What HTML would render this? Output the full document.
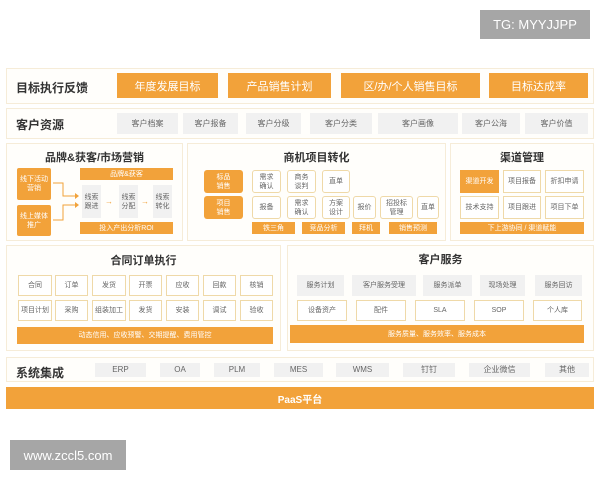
<!DOCTYPE html>
<html><head><meta charset="utf-8"><style>
*{margin:0;padding:0;box-sizing:border-box}
body{width:600px;height:480px;background:#fff;position:relative;overflow:hidden;font-family:"Liberation Sans","Noto Sans CJK SC",sans-serif;color:#444}
div{position:absolute}
.p{border:1px solid #f6ecd8;background:#fffefb}
.o{background:#f2a23a;color:#fff;display:flex;align-items:center;justify-content:center;text-align:center}
.g{background:#f1f1f1;color:#666;display:flex;align-items:center;justify-content:center;text-align:center}
.w{background:#fff;border:1px solid #efd9a8;border-radius:3px;color:#666;display:flex;align-items:center;justify-content:center;text-align:center}
.t{font-weight:bold;color:#333}
.s7{font-size:7px;line-height:9px}
.s8{font-size:8px;line-height:10px}
</style></head><body>
<div style="left:480px;top:10px;width:110px;height:29px;background:#a6a6a6;color:#fff;font-size:13px;display:flex;align-items:center;justify-content:center">TG: MYYJJPP</div>

<div class="p" style="left:6px;top:68px;width:588px;height:36px"></div>
<div class="t" style="left:16px;top:79px;font-size:12px">目标执行反馈</div>
<div class="o" style="left:117px;top:73px;width:101px;height:25px;font-size:11px">年度发展目标</div>
<div class="o" style="left:228px;top:73px;width:103px;height:25px;font-size:11px">产品销售计划</div>
<div class="o" style="left:341px;top:73px;width:139px;height:25px;font-size:11px">区/办/个人销售目标</div>
<div class="o" style="left:489px;top:73px;width:99px;height:25px;font-size:11px">目标达成率</div>

<div class="p" style="left:6px;top:108px;width:588px;height:31px"></div>
<div class="t" style="left:16px;top:116px;font-size:12px">客户资源</div>
<div class="g s8" style="left:117px;top:113px;width:61px;height:21px">客户档案</div>
<div class="g s8" style="left:183px;top:113px;width:55px;height:21px">客户报备</div>
<div class="g s8" style="left:246px;top:113px;width:55px;height:21px">客户分级</div>
<div class="g s8" style="left:310px;top:113px;width:62px;height:21px">客户分类</div>
<div class="g s8" style="left:378px;top:113px;width:80px;height:21px">客户画像</div>
<div class="g s8" style="left:462px;top:113px;width:58px;height:21px">客户公海</div>
<div class="g s8" style="left:525px;top:113px;width:63px;height:21px">客户价值</div>

<div class="p" style="left:6px;top:143px;width:177px;height:98px"></div>
<div class="t" style="left:6px;width:177px;top:149px;font-size:11px;text-align:center">品牌&amp;获客/市场营销</div>
<div class="o s7" style="left:17px;top:168px;width:34px;height:32px;border-radius:2px">线下活动<br>营销</div>
<div class="o s7" style="left:17px;top:205px;width:34px;height:31px;border-radius:2px">线上媒体<br>推广</div>
<svg style="position:absolute;left:51px;top:175px" width="30" height="50"><path d="M2 8H12V21H24M2 45H12V30H24" fill="none" stroke="#f2a23a" stroke-width="1"/><path d="M24 18l4 3-4 3zM24 27l4 3-4 3z" fill="#f2a23a"/></svg>
<div class="o s7" style="left:80px;top:168px;width:93px;height:12px">品牌&amp;获客</div>
<div class="g s7" style="left:82px;top:185px;width:19px;height:33px">线索<br>跟进</div>
<div class="g s7" style="left:119px;top:185px;width:19px;height:33px">线索<br>分配</div>
<div class="g s7" style="left:153px;top:185px;width:19px;height:33px">线索<br>转化</div>
<div style="left:105px;top:197px;color:#f2a23a;font-size:8px">→</div>
<div style="left:141px;top:197px;color:#f2a23a;font-size:8px">→</div>
<div class="o s7" style="left:80px;top:222px;width:93px;height:12px">投入产出分析ROI</div>

<div class="p" style="left:187px;top:143px;width:259px;height:98px"></div>
<div class="t" style="left:187px;width:259px;top:149px;font-size:11px;text-align:center">商机项目转化</div>
<div class="o s7" style="left:204px;top:170px;width:39px;height:23px;border-radius:3px">标品<br>销售</div>
<div class="o s7" style="left:204px;top:196px;width:39px;height:23px;border-radius:3px">项目<br>销售</div>
<div class="w s7" style="left:252px;top:170px;width:29px;height:23px">需求<br>确认</div>
<div class="w s7" style="left:287px;top:170px;width:29px;height:23px">商务<br>谈判</div>
<div class="w s7" style="left:322px;top:170px;width:28px;height:23px">直单</div>
<div class="w s7" style="left:252px;top:196px;width:29px;height:23px">报备</div>
<div class="w s7" style="left:287px;top:196px;width:29px;height:23px">需求<br>确认</div>
<div class="w s7" style="left:322px;top:196px;width:28px;height:23px">方案<br>设计</div>
<div class="w s7" style="left:353px;top:196px;width:23px;height:23px">报价</div>
<div class="w s7" style="left:380px;top:196px;width:33px;height:23px">招投标<br>管理</div>
<div class="w s7" style="left:417px;top:196px;width:22px;height:23px">直单</div>
<div class="o s7" style="left:252px;top:222px;width:43px;height:12px">铁三角</div>
<div class="o s7" style="left:302px;top:222px;width:43px;height:12px">竞品分析</div>
<div class="o s7" style="left:352px;top:222px;width:28px;height:12px">拜机</div>
<div class="o s7" style="left:389px;top:222px;width:48px;height:12px">销售预测</div>

<div class="p" style="left:450px;top:143px;width:144px;height:98px"></div>
<div class="t" style="left:450px;width:144px;top:149px;font-size:11px;text-align:center">渠道管理</div>
<div class="o s7" style="left:460px;top:170px;width:39px;height:23px">渠道开发</div>
<div class="w s7" style="left:503px;top:170px;width:38px;height:23px;border-radius:0">项目报备</div>
<div class="w s7" style="left:545px;top:170px;width:39px;height:23px;border-radius:0">折扣申请</div>
<div class="w s7" style="left:460px;top:196px;width:39px;height:23px;border-radius:0">技术支持</div>
<div class="w s7" style="left:503px;top:196px;width:38px;height:23px;border-radius:0">项目跟进</div>
<div class="w s7" style="left:545px;top:196px;width:39px;height:23px;border-radius:0">项目下单</div>
<div class="o s7" style="left:460px;top:222px;width:124px;height:12px">下上游协同 / 渠道赋能</div>

<div class="p" style="left:6px;top:245px;width:275px;height:106px"></div>
<div class="t" style="left:6px;width:275px;top:252px;font-size:11px;text-align:center">合同订单执行</div>
<div class="w s7" style="left:18px;top:275px;width:34px;height:21px;border-radius:0">合同</div>
<div class="w s7" style="left:55px;top:275px;width:33px;height:21px;border-radius:0">订单</div>
<div class="w s7" style="left:92px;top:275px;width:34px;height:21px;border-radius:0">发货</div>
<div class="w s7" style="left:129px;top:275px;width:33px;height:21px;border-radius:0">开票</div>
<div class="w s7" style="left:166px;top:275px;width:33px;height:21px;border-radius:0">应收</div>
<div class="w s7" style="left:203px;top:275px;width:33px;height:21px;border-radius:0">回款</div>
<div class="w s7" style="left:240px;top:275px;width:33px;height:21px;border-radius:0">核销</div>
<div class="w s7" style="left:18px;top:300px;width:34px;height:21px;border-radius:0">项目计划</div>
<div class="w s7" style="left:55px;top:300px;width:33px;height:21px;border-radius:0">采购</div>
<div class="w s7" style="left:92px;top:300px;width:34px;height:21px;border-radius:0">组装加工</div>
<div class="w s7" style="left:129px;top:300px;width:33px;height:21px;border-radius:0">发货</div>
<div class="w s7" style="left:166px;top:300px;width:33px;height:21px;border-radius:0">安装</div>
<div class="w s7" style="left:203px;top:300px;width:33px;height:21px;border-radius:0">调试</div>
<div class="w s7" style="left:240px;top:300px;width:33px;height:21px;border-radius:0">验收</div>
<div class="o s7" style="left:17px;top:327px;width:256px;height:17px">动态信用、应收预警、交期提醒、费用管控</div>

<div class="p" style="left:287px;top:245px;width:307px;height:106px"></div>
<div class="t" style="left:287px;width:307px;top:251px;font-size:11px;text-align:center">客户服务</div>
<div class="g s7" style="left:297px;top:275px;width:47px;height:21px">服务计划</div>
<div class="g s7" style="left:352px;top:275px;width:64px;height:21px">客户服务受理</div>
<div class="g s7" style="left:423px;top:275px;width:49px;height:21px">服务派单</div>
<div class="g s7" style="left:480px;top:275px;width:45px;height:21px">现场处理</div>
<div class="g s7" style="left:535px;top:275px;width:47px;height:21px">服务回访</div>
<div class="w s7" style="left:297px;top:300px;width:50px;height:21px;border-radius:0">设备资产</div>
<div class="w s7" style="left:356px;top:300px;width:50px;height:21px;border-radius:0">配件</div>
<div class="w s7" style="left:415px;top:300px;width:50px;height:21px;border-radius:0">SLA</div>
<div class="w s7" style="left:474px;top:300px;width:50px;height:21px;border-radius:0">SOP</div>
<div class="w s7" style="left:533px;top:300px;width:49px;height:21px;border-radius:0">个人库</div>
<div class="o s7" style="left:290px;top:325px;width:294px;height:18px">服务质量、服务效率、服务成本</div>

<div class="p" style="left:6px;top:357px;width:588px;height:25px"></div>
<div class="t" style="left:16px;top:364px;font-size:12px">系统集成</div>
<div class="g s8" style="left:95px;top:363px;width:51px;height:14px">ERP</div>
<div class="g s8" style="left:160px;top:363px;width:40px;height:14px">OA</div>
<div class="g s8" style="left:214px;top:363px;width:46px;height:14px">PLM</div>
<div class="g s8" style="left:274px;top:363px;width:49px;height:14px">MES</div>
<div class="g s8" style="left:336px;top:363px;width:53px;height:14px">WMS</div>
<div class="g s8" style="left:403px;top:363px;width:52px;height:14px">钉钉</div>
<div class="g s8" style="left:469px;top:363px;width:61px;height:14px">企业微信</div>
<div class="g s8" style="left:545px;top:363px;width:44px;height:14px">其他</div>

<div class="o" style="left:6px;top:387px;width:588px;height:22px;font-size:10px;font-weight:bold">PaaS平台</div>

<div style="left:10px;top:440px;width:116px;height:30px;background:#a6a6a6;color:#fff;font-size:13px;display:flex;align-items:center;justify-content:center">www.zccl5.com</div>
</body></html>
